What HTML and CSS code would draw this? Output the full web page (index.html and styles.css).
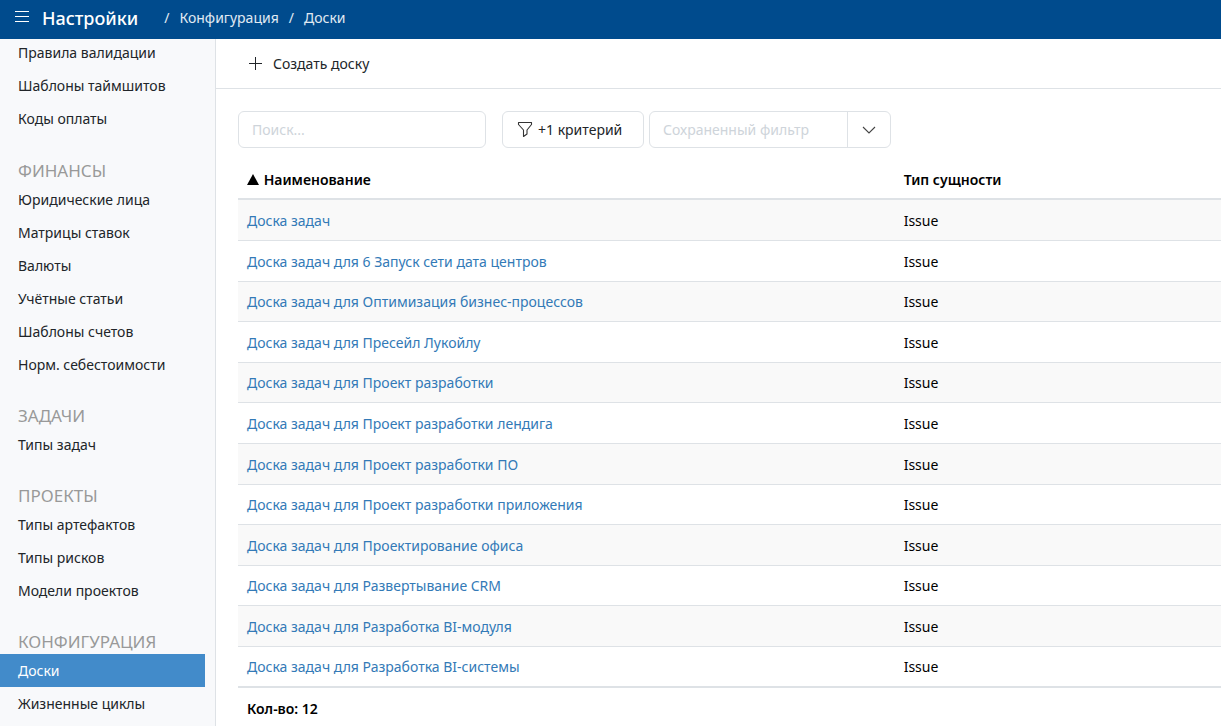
FILE: index.html
```html
<!DOCTYPE html>
<html lang="ru">
<head>
    <meta charset="UTF-8">
    <meta name="viewport" content="width=device-width, initial-scale=1.0">
    <title>Настройки</title>
    <link rel="stylesheet" href="styles.css">
</head>
<body>
    <header class="topbar">
        <button class="menu-btn" type="button" aria-label="Меню">
            <svg width="14" height="13" viewBox="0 0 14 13" stroke="#fff" stroke-width="1"><path d="M0 1.5h14M0 6.5h14M0 11.5h14"/></svg>
        </button>
        <h1 class="title">Настройки</h1>
        <nav class="breadcrumbs">
            <span>/</span>
            <a href="#">Конфигурация</a>
            <span>/</span>
            <a href="#">Доски</a>
        </nav>
    </header>
    <div class="layout">
        <nav class="sidebar">
            <ul class="menu">
                <li><a href="#">Правила валидации</a></li>
                <li><a href="#">Шаблоны таймшитов</a></li>
                <li><a href="#">Коды оплаты</a></li>
            </ul>
            <h2 class="menu-heading">ФИНАНСЫ</h2>
            <ul class="menu">
                <li><a href="#">Юридические лица</a></li>
                <li><a href="#">Матрицы ставок</a></li>
                <li><a href="#">Валюты</a></li>
                <li><a href="#">Учётные статьи</a></li>
                <li><a href="#">Шаблоны счетов</a></li>
                <li><a href="#">Норм. себестоимости</a></li>
            </ul>
            <h2 class="menu-heading">ЗАДАЧИ</h2>
            <ul class="menu">
                <li><a href="#">Типы задач</a></li>
            </ul>
            <h2 class="menu-heading">ПРОЕКТЫ</h2>
            <ul class="menu">
                <li><a href="#">Типы артефактов</a></li>
                <li><a href="#">Типы рисков</a></li>
                <li><a href="#">Модели проектов</a></li>
            </ul>
            <h2 class="menu-heading">КОНФИГУРАЦИЯ</h2>
            <ul class="menu">
                <li><a href="#" class="active">Доски</a></li>
                <li><a href="#">Жизненные циклы</a></li>
            </ul>
        </nav>
        <main class="main">
            <div class="toolbar">
                <button class="create-btn" type="button">
                    <svg width="14" height="14" viewBox="0 0 14 14" stroke="#212529" stroke-width="1"><path d="M6.5 0v13M0 6.5h13"/></svg>
                    Создать доску
                </button>
            </div>
            <div class="content">
                <div class="filters">
                    <input class="search" type="text" placeholder="Поиск..." aria-label="Поиск">
                    <button class="criteria-btn" type="button">
                        <svg width="16" height="18" viewBox="0 0 16 18" fill="none" stroke="#333" stroke-width="1.1" stroke-linejoin="round"><path d="M1.500 1.500h13v2L10 9v4L6.500 15.500V9L1.500 3.500z"/></svg>
                        +1 критерий
                    </button>
                    <div class="saved-filter">
                        <input type="text" placeholder="Сохраненный фильтр" aria-label="Сохраненный фильтр">
                        <button type="button" aria-label="Открыть список">
                            <svg width="14" height="8" viewBox="0 0 14 8" fill="none" stroke="#444" stroke-width="1.1"><path d="M1 1l6 6 6-6"/></svg>
                        </button>
                    </div>
                </div>
                <table class="boards">
                    <thead>
                        <tr>
                            <th class="name-col"><svg class="sort-icon" width="12" height="11" viewBox="0 0 12 11"><path d="M6 0l6 11H0z"/></svg> Наименование</th>
                            <th>Тип сущности</th>
                        </tr>
                    </thead>
                    <tbody>
                        <tr><td><a href="#">Доска задач</a></td><td>Issue</td></tr>
                        <tr><td><a href="#">Доска задач для 6 Запуск сети дата центров</a></td><td>Issue</td></tr>
                        <tr><td><a href="#">Доска задач для Оптимизация бизнес-процессов</a></td><td>Issue</td></tr>
                        <tr><td><a href="#">Доска задач для Пресейл Лукойлу</a></td><td>Issue</td></tr>
                        <tr><td><a href="#">Доска задач для Проект разработки</a></td><td>Issue</td></tr>
                        <tr><td><a href="#">Доска задач для Проект разработки лендига</a></td><td>Issue</td></tr>
                        <tr><td><a href="#">Доска задач для Проект разработки ПО</a></td><td>Issue</td></tr>
                        <tr><td><a href="#">Доска задач для Проект разработки приложения</a></td><td>Issue</td></tr>
                        <tr><td><a href="#">Доска задач для Проектирование офиса</a></td><td>Issue</td></tr>
                        <tr><td><a href="#">Доска задач для Развертывание CRM</a></td><td>Issue</td></tr>
                        <tr><td><a href="#">Доска задач для Разработка BI-модуля</a></td><td>Issue</td></tr>
                        <tr><td><a href="#">Доска задач для Разработка BI-системы</a></td><td>Issue</td></tr>
                    </tbody>
                    <tfoot>
                        <tr><td colspan="2">Кол-во: 12</td></tr>
                    </tfoot>
                </table>
            </div>
        </main>
    </div>
</body>
</html>
```
FILE: styles.css
```css
* {
    box-sizing: border-box;
}
body {
    margin: 0;
    height: 100vh;
    display: flex;
    flex-direction: column;
    overflow: hidden;
    font-family: "Segoe UI", "Noto Sans", sans-serif;
    font-size: 14px;
    line-height: 24px;
    color: #212529;
    background: #fff;
}
a {
    color: inherit;
    text-decoration: none;
}
button, input {
    font: inherit;
    color: inherit;
    background: none;
    border: none;
    padding: 0;
    margin: 0;
}
button {
    cursor: pointer;
}
svg {
    flex: none;
}

/* top bar */
.topbar {
    flex: none;
    height: 39px;
    padding: 0 15px 3px;
    display: flex;
    align-items: center;
    background: #004b8d;
    color: #fff;
}
.menu-btn {
    display: flex;
    padding-bottom: 4px;
}
.title {
    margin: 0 26px 0 13px;
    font-size: 18px;
    font-weight: 500;
}
.breadcrumbs {
    display: flex;
    gap: 10px;
    color: #e0eaf3;
}

.layout {
    flex: 1;
    min-height: 0;
    display: flex;
}

/* sidebar */
.sidebar {
    flex: none;
    width: 216px;
    padding-right: 10px;
    overflow: hidden;
    background: #f8f9fb;
    border-right: 1px solid #dee2e6;
}
.menu {
    margin: 0;
    padding: 0;
    list-style: none;
}
.menu:first-child {
    margin: -3px 0 24px;
}
.menu a {
    display: block;
    padding: 0 18px;
    line-height: 33px;
    white-space: nowrap;
}
.menu a.active {
    background: #428bca;
    color: #fff;
}
.menu-heading {
    margin: 23px 0 0;
    padding-left: 18px;
    font-size: 17px;
    font-weight: 400;
    color: #999;
}

/* main area */
.main {
    flex: 1;
    min-width: 0;
}
.toolbar {
    height: 50px;
    padding: 0 33px;
    display: flex;
    align-items: center;
    border-bottom: 1px solid #dee2e6;
}
.create-btn {
    display: flex;
    align-items: center;
    gap: 10px;
}
.content {
    padding: 22px 0 0 22px;
}
.filters {
    display: flex;
    margin-bottom: 13px;
}
.search, .criteria-btn, .saved-filter {
    height: 37px;
    border: 1px solid #dee2e6;
    border-radius: 6px;
}
.search {
    width: 248px;
    padding: 0 13px;
    margin-right: 16px;
}
::placeholder {
    color: #ced4da;
    opacity: 1;
}
.criteria-btn {
    width: 142px;
    padding: 0 14px;
    display: flex;
    align-items: center;
    gap: 5px;
    margin-right: 5px;
}
.saved-filter {
    width: 242px;
    display: flex;
}
.saved-filter input {
    flex: 1;
    min-width: 0;
    padding: 0 13px;
}
.saved-filter button {
    width: 43px;
    display: flex;
    align-items: center;
    justify-content: center;
    border-left: 1px solid #dee2e6;
}

/* boards table */
.boards {
    width: 100%;
    border-spacing: 0;
    table-layout: fixed;
    color: #000;
}
.boards th, .boards td {
    height: 41px;
    padding: 0 9px;
    text-align: left;
}
.boards th {
    height: 39px;
    font-weight: 600;
    border-bottom: 2px solid #dee2e6;
}
.boards .name-col {
    width: 66.8%;
}
.sort-icon {
    margin-right: 1px;
}
.boards tbody td {
    padding-top: 1px;
    border-bottom: 1px solid #dee2e6;
}
.boards tbody tr:nth-child(5n) td, .boards tbody tr:nth-child(5n+3) td {
    height: 40px;
}
.boards tbody tr:nth-child(odd) {
    background: #f9f9f9;
}
.boards tbody tr:last-child td {
    border-bottom-width: 2px;
}
.boards tbody a {
    color: #337ab7;
}
.boards tfoot td {
    font-weight: 600;
}
```
